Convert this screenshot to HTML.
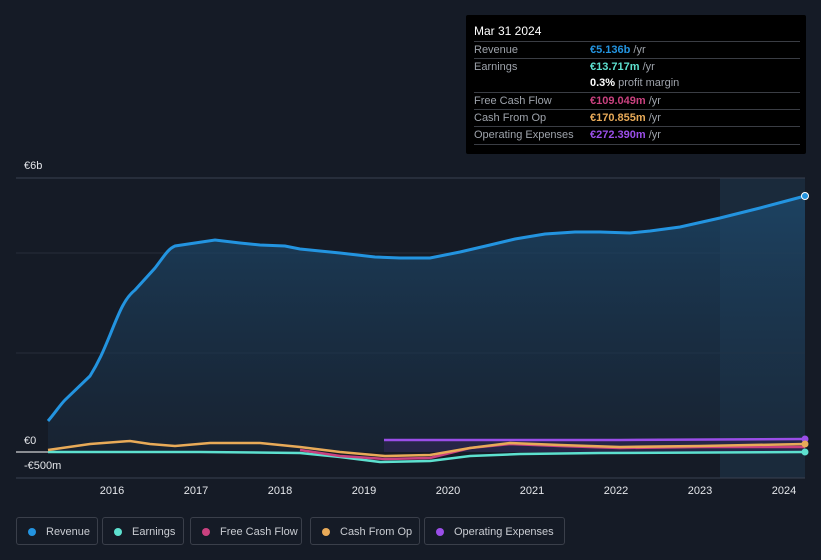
<!DOCTYPE html>
<html><head><meta charset="utf-8"><style>
body{margin:0;width:821px;height:560px;background:#151b26;font-family:"Liberation Sans",sans-serif;overflow:hidden;position:relative}
.tt{position:absolute;left:466px;top:15px;width:340px;height:139px;background:#000;border-radius:2px}
.tt .h{position:absolute;left:8px;top:9px;color:#fff;font-size:12px}
.row{position:absolute;left:8px;width:326px;border-top:1px solid #3a3d44;font-size:11px;color:#9ea3ab;height:17px;line-height:17px}
.row span{position:absolute;left:116px}
.row b{font-weight:bold}
.lg{position:absolute;top:517px;height:28px;border:1px solid #3a3f4a;border-radius:3px;color:#c9ccd2;font-size:11px;line-height:28px;box-sizing:border-box;padding-left:29px}
.lg i{position:absolute;left:11px;top:10px;width:8px;height:8px;border-radius:50%}
.ax{position:absolute;top:485px;color:#e4e6ea;font-size:11px;transform:translateX(-50%)}
</style></head><body>
<svg width="821" height="560" style="position:absolute;left:0;top:0">
<defs><linearGradient id="g" x1="0" y1="0" x2="0" y2="1"><stop offset="0" stop-color="#1d4a6e" stop-opacity="0.75"/><stop offset="1" stop-color="#1a2a3d" stop-opacity="0.5"/></linearGradient></defs>
<rect x="720" y="178" width="85" height="300" fill="#1a2a3b"/>
<line x1="16" y1="178" x2="805" y2="178" stroke="#394050"/>
<line x1="16" y1="253" x2="805" y2="253" stroke="#262d3a"/>
<line x1="16" y1="353" x2="805" y2="353" stroke="#262d3a"/>
<path d="M48,421 C55,413 60,405 65,400 L90,376 C100,360 105,347 110,335 C120,310 125,298 135,290 L155,268 C165,255 168,249 175,246 L195,243 L215,240 L240,243 L260,245 L285,246 L300,249 L340,253 L375,257 L400,258 L430,258 L460,252 L490,245 L515,239 L545,234 L575,232 L600,232 L630,233 L650,231 L680,227 L720,218 L760,208 L805,196 L805,452 L48,452Z" fill="url(#g)"/>
<path d="M48,421 C55,413 60,405 65,400 L90,376 C100,360 105,347 110,335 C120,310 125,298 135,290 L155,268 C165,255 168,249 175,246 L195,243 L215,240 L240,243 L260,245 L285,246 L300,249 L340,253 L375,257 L400,258 L430,258 L460,252 L490,245 L515,239 L545,234 L575,232 L600,232 L630,233 L650,231 L680,227 L720,218 L760,208 L805,196" fill="none" stroke="#2394e0" stroke-width="3"/>
<rect x="384" y="440" width="421" height="12" fill="#2d2650" opacity="0.7"/>
<line x1="16" y1="452" x2="48" y2="452" stroke="#fff" stroke-width="1"/>
<line x1="16" y1="478" x2="805" y2="478" stroke="#394050"/>
<path d="M48,452 L100,452 L200,452 L300,453 L340,457 L380,462 L430,461 L470,456 L520,454 L600,453 L805,452" fill="none" stroke="#5de0cf" stroke-width="2.5"/>
<path d="M300,450 L340,456 L385,459 L430,458 L470,448 L510,444 L560,446 L620,448 L700,447 L805,447" fill="none" stroke="#c9417f" stroke-width="2.5"/>
<path d="M48,450 L90,444 L130,441 L150,444 L175,446 L210,443 L260,443 L300,447 L340,452 L385,456 L430,455 L470,448 L510,443 L560,445 L620,447 L700,446 L805,444" fill="none" stroke="#e8aa58" stroke-width="2.5"/>
<path d="M384,440 L500,440 L620,440 L805,439" fill="none" stroke="#9a4ee8" stroke-width="2.5"/>
<circle cx="805" cy="196" r="3.5" fill="#2394e0" stroke="#fff" stroke-width="1"/>
<circle cx="805" cy="439" r="3.5" fill="#9a4ee8"/>
<circle cx="805" cy="444" r="3.5" fill="#e8aa58"/>
<circle cx="805" cy="452" r="3.5" fill="#5de0cf"/>
</svg>
<div style="position:absolute;left:24px;top:160px;color:#e4e6ea;font-size:11px">€6b</div>
<div style="position:absolute;left:24px;top:435px;color:#e4e6ea;font-size:11px">€0</div>
<div style="position:absolute;left:24px;top:460px;color:#e4e6ea;font-size:11px">-€500m</div>
<div class="ax" style="left:112px">2016</div><div class="ax" style="left:196px">2017</div><div class="ax" style="left:280px">2018</div><div class="ax" style="left:364px">2019</div><div class="ax" style="left:448px">2020</div><div class="ax" style="left:532px">2021</div><div class="ax" style="left:616px">2022</div><div class="ax" style="left:700px">2023</div><div class="ax" style="left:784px">2024</div>
<div class="tt"><div class="h">Mar 31 2024</div>
<div class="row" style="top:26px">Revenue<span><b style="color:#2394e0">€5.136b</b> /yr</span></div>
<div class="row" style="top:43px">Earnings<span><b style="color:#5de0cf">€13.717m</b> /yr</span></div>
<div class="row" style="top:60px;border-top:none"><span><b style="color:#fff">0.3%</b> profit margin</span></div>
<div class="row" style="top:77px">Free Cash Flow<span><b style="color:#c9417f">€109.049m</b> /yr</span></div>
<div class="row" style="top:94px">Cash From Op<span><b style="color:#e8aa58">€170.855m</b> /yr</span></div>
<div class="row" style="top:111px;border-bottom:1px solid #3a3d44">Operating Expenses<span><b style="color:#9a4ee8">€272.390m</b> /yr</span></div>
</div>
<div class="lg" style="left:16px;width:82px"><i style="background:#2394e0"></i>Revenue</div>
<div class="lg" style="left:102px;width:82px"><i style="background:#5de0cf"></i>Earnings</div>
<div class="lg" style="left:190px;width:112px"><i style="background:#c9417f"></i>Free Cash Flow</div>
<div class="lg" style="left:310px;width:110px"><i style="background:#e8aa58"></i>Cash From Op</div>
<div class="lg" style="left:424px;width:141px"><i style="background:#9a4ee8"></i>Operating Expenses</div>
</body></html>
